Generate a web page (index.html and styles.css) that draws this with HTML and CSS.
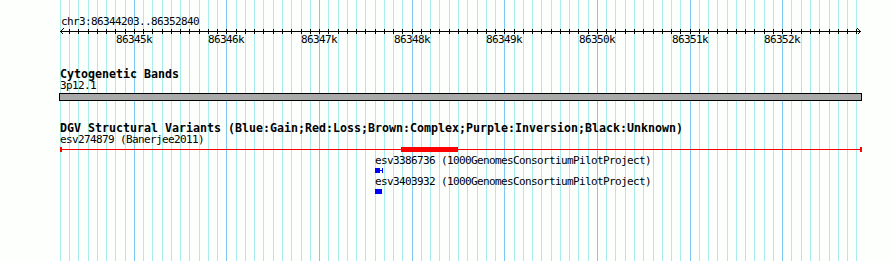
FILE: index.html
```html
<!DOCTYPE html>
<html>
    <head>
        <meta charset="UTF-8"/>
        <meta name="viewport" content="width=device-width, initial-scale=1">
        <link rel="stylesheet" href="styles.css">
    </head>
    <body>
        <div class="Panel">
            <svg class="Grid" width="890" height="261"></svg>

            <div class="Ruler">
                <svg width="890" height="48">
                    <text class="Position" x="61" y="25">chr3:86344203..86352840</text>
                    <rect class="Axis" x="60" y="31" width="801" height="1"/>
                    <path class="Arrow" d="M63.5 28.5 L60.5 31.5 L63.5 34.5"/>
                    <path class="Arrow" d="M857.5 28.5 L860.5 31.5 L857.5 34.5"/>
                    <g class="Ticks"></g>
                </svg>
            </div>

            <div class="Track Cyto">
                <h2>Cytogenetic Bands</h2>
                <div class="Label">3p12.1</div>
                <div class="Band"></div>
            </div>

            <div class="Track DGV">
                <h2>DGV Structural Variants (Blue:Gain;Red:Loss;Brown:Complex;Purple:Inversion;Black:Unknown)</h2>

                <div class="Feature">
                    <div class="Label">esv274879 (Banerjee2011)</div>
                    <div class="Glyph Loss" style="width:802px;">
                        <span class="Line"></span>
                        <span class="Cap Start"></span>
                        <span class="Cap End"></span>
                        <span class="Block" style="left:341px; width:57px;"></span>
                    </div>
                </div>

                <div class="Feature" style="margin-left:315px;">
                    <div class="Label">esv3386736 (1000GenomesConsortiumPilotProject)</div>
                    <svg class="Glyph Gain" width="8" height="5">
                        <rect x="0" y="0" width="4" height="5"/>
                        <rect x="4" y="0" width="1" height="5"/>
                        <rect x="5" y="2" width="2" height="1"/>
                        <rect x="7" y="0" width="1" height="5"/>
                    </svg>
                </div>

                <div class="Feature" style="margin-left:315px;">
                    <div class="Label">esv3403932 (1000GenomesConsortiumPilotProject)</div>
                    <svg class="Glyph Gain" width="7" height="5">
                        <rect x="0" y="0" width="7" height="5"/>
                    </svg>
                </div>
            </div>
        </div>
        <script src="app.js"></script>
    </body>
</html>
```

FILE: styles.css
```css
body
{
    margin:0;
    background:#fdfffd;
    font-family:"DejaVu Sans Mono", monospace;
    font-size:11px;
    letter-spacing:-0.62px;
    color:#000;
}
.Panel
{
    position:relative;
    width:890px;
    height:261px;
    overflow:hidden;
}
.Grid
{
    position:absolute;
    top:0;
    left:0;
}
.Grid rect
{
    shape-rendering:crispEdges;
}
.Grid .Minor
{
    fill:#a8ecee;
}
.Grid .Major
{
    fill:#80c8f4;
}

.Ruler
{
    position:relative;
}
.Ruler svg
{
    display:block;
}
.Ruler text
{
    font-family:"DejaVu Sans Mono", monospace;
    font-size:11px;
    letter-spacing:-0.62px;
    fill:#000;
}
.Ruler .Axis,
.Ruler .Ticks rect
{
    fill:#000;
    shape-rendering:crispEdges;
}
.Ruler .Arrow
{
    fill:none;
    stroke:#000;
    stroke-width:1;
    shape-rendering:crispEdges;
}

.Track
{
    position:relative;
    padding-left:60px;
}
.Track h2
{
    margin:0;
    font-size:11.63px;
    font-weight:bold;
    letter-spacing:0;
    line-height:12px;
    white-space:nowrap;
}
.Label
{
    line-height:12px;
    white-space:nowrap;
}

.Cyto
{
    margin-top:20px;
}
.Band
{
    margin:1px 0 0 -1px;
    width:801px;
    height:6px;
    border:1px solid #000;
    background:#a9a9a9;
}

.DGV
{
    margin-top:21px;
}
.Feature
{
    margin-bottom:3px;
}
.Glyph
{
    display:block;
    position:relative;
    height:5px;
    margin-top:1px;
}
.Loss .Line
{
    position:absolute;
    top:2px;
    left:0;
    right:0;
    height:1px;
    background:#f00;
}
.Loss .Cap
{
    position:absolute;
    top:0;
    width:2px;
    height:5px;
    background:#f00;
}
.Loss .Start
{
    left:0;
}
.Loss .End
{
    right:0;
}
.Loss .Block
{
    position:absolute;
    top:0;
    height:5px;
    background:#f00;
}
.Gain rect
{
    fill:#0000ff;
    shape-rendering:crispEdges;
}
```

FILE: app.js
```js
var START = 86344203;
var END = 86352840;
var LEFT = 60;
var WIDTH = 800;
var SVGNS = "http://www.w3.org/2000/svg";

function ToPixel(bp)
{
    return Math.round(LEFT + (bp - START) * WIDTH / (END - START));
}

function Make(tag, attrs, parent)
{
    var node = document.createElementNS(SVGNS, tag);
    for (var key in attrs) node.setAttribute(key, attrs[key]);
    parent.appendChild(node);
    return node;
}

function DrawGrid()
{
    var svg = document.querySelector(".Grid");
    Make("rect", {x:LEFT, y:0, width:1, height:261, "class":"Minor"}, svg);
    for (var bp = Math.ceil(START / 100) * 100; bp <= END; bp += 100)
    {
        var type = (bp % 1000 == 0) ? "Major" : "Minor";
        Make("rect", {x:ToPixel(bp), y:0, width:1, height:261, "class":type}, svg);
    }
}

function DrawRuler()
{
    var ticks = document.querySelector(".Ruler .Ticks");
    for (var bp = Math.ceil(START / 100) * 100; bp <= END; bp += 100)
    {
        var x = ToPixel(bp);
        Make("rect", {x:x, y:29, width:1, height:5}, ticks);
        if (bp % 1000 == 0)
        {
            var label = Make("text", {x:x, y:43, "text-anchor":"middle"}, ticks);
            label.textContent = (bp / 1000) + "k";
        }
    }
}

DrawGrid();
DrawRuler();
```
